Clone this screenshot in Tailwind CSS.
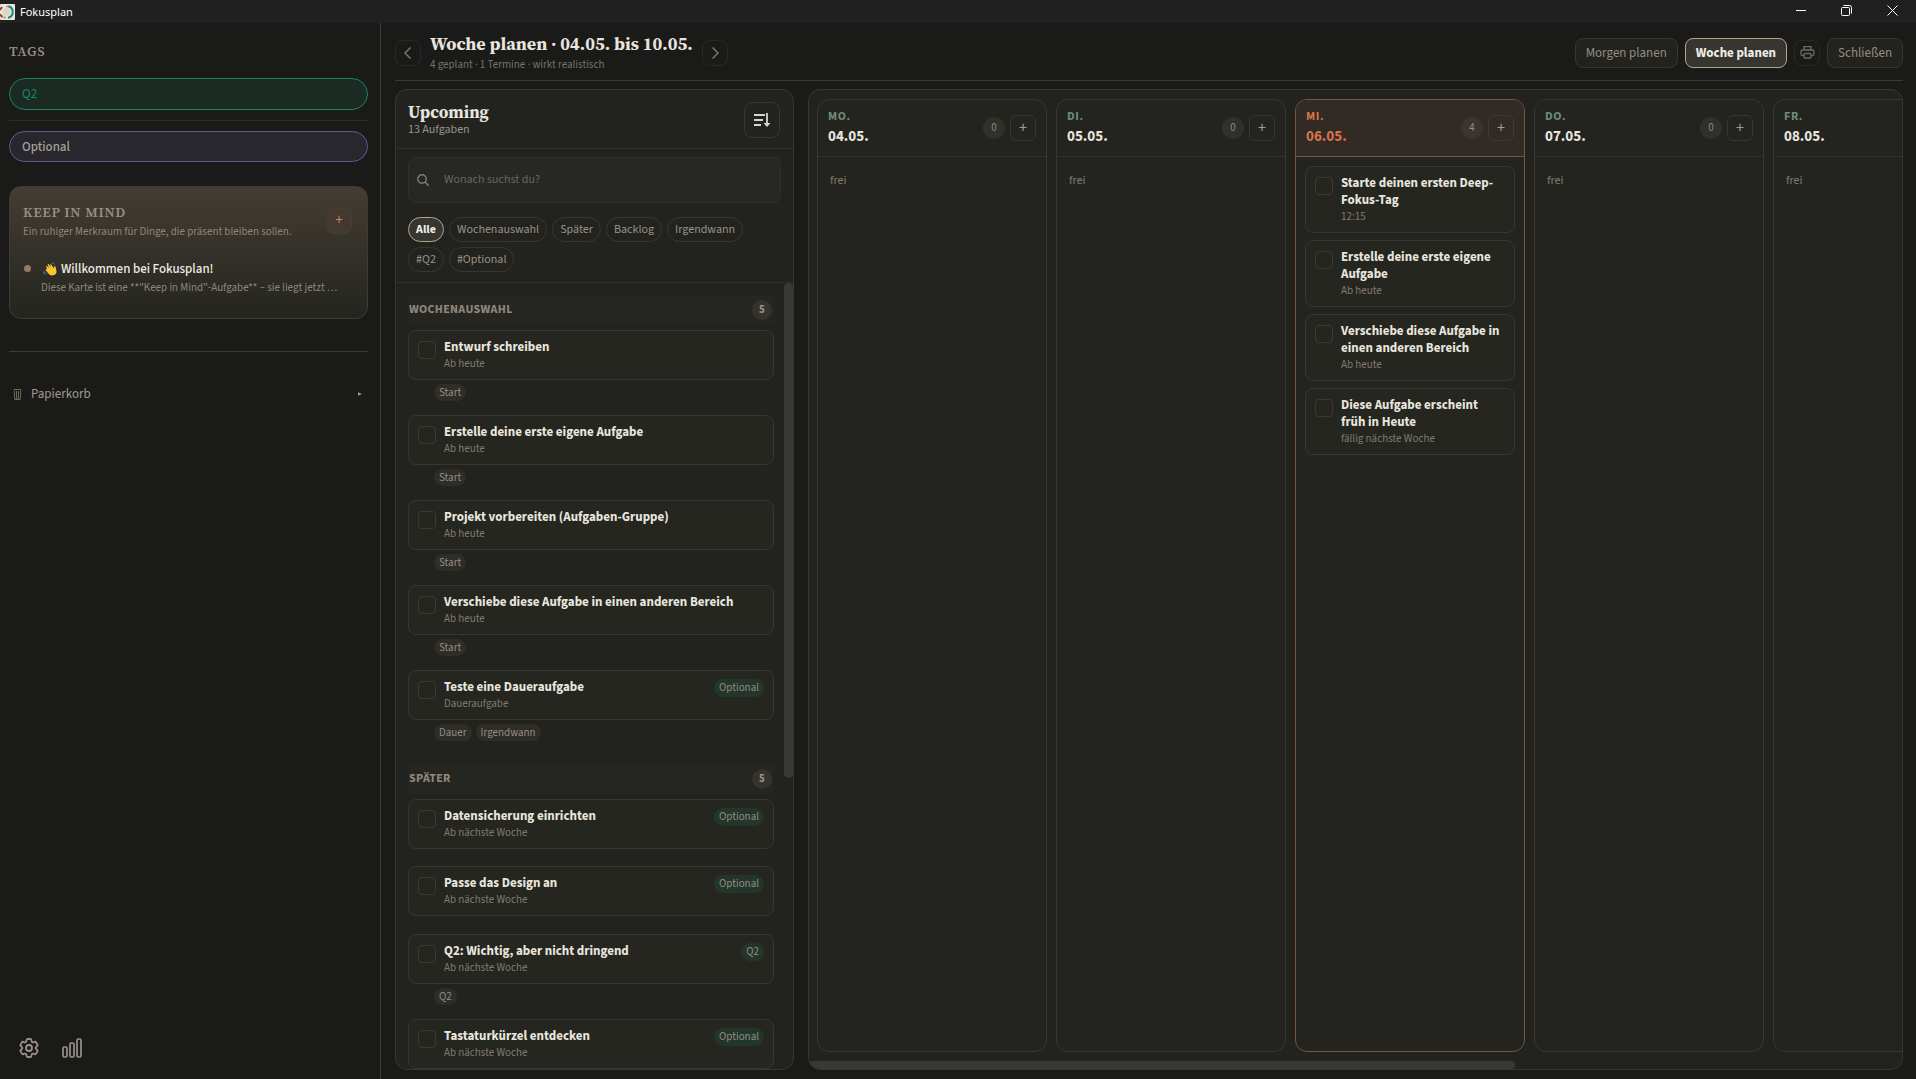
<!DOCTYPE html>
<html lang="de">
<head>
    <meta charset="UTF-8">
    <meta name="viewport" content="width=device-width, initial-scale=1.0">
    <title>Fokusplan</title>
    <script src="https://cdn.jsdelivr.net/npm/@tailwindcss/browser@4"></script>
</head>
<body class="h-screen flex flex-col overflow-hidden bg-[#1a1a18] text-[#e8e5de] text-[12px] leading-4 font-['Source_Sans_3','Source_Sans_Pro','Noto_Sans_CJK_SC',sans-serif]">
    <!-- Titelleiste -->
    <header class="h-[23px] shrink-0 flex items-center justify-between bg-[#202020] text-white">
        <div class="flex items-center gap-[5px]">
            <svg class="w-[15px] h-4" viewBox="0 0 15 16" fill="none">
                <rect width="15" height="16" rx="1" fill="#ece6dc"/>
                <path d="M2 3 0 6M0 10.500 2.500 13" stroke="#8d3a2c" stroke-width="2"/>
                <path d="M6 2.500h3M3 13.500h3" stroke="#b98a74" stroke-width="1.500"/>
                <path d="M8.500 2.200A6 6 0 0 1 8 13.800" stroke="#0f8a80" stroke-width="2"/>
                <circle cx="6.500" cy="8" r="4" fill="#dcd5c9"/>
            </svg>
            <span class="font-['Noto_Sans',sans-serif] text-[11px]">Fokusplan</span>
        </div>
        <div class="flex items-center gap-[35px] pr-[18px] pb-[3px]">
            <button aria-label="Minimieren"><svg class="w-[10px] h-[10px]" viewBox="0 0 10 10" stroke="currentColor"><path d="M0 5.500h10"/></svg></button>
            <button aria-label="Wiederherstellen"><svg class="w-[11px] h-[11px]" viewBox="0 0 11 11" fill="none" stroke="currentColor"><rect x=".5" y="2.500" width="8" height="8" rx="1"/><path d="M2.500.5H8.500a2 2 0 0 1 2 2V8.500"/></svg></button>
            <button aria-label="Fenster schließen"><svg class="w-[11px] h-[11px]" viewBox="0 0 11 11" stroke="currentColor"><path d="M.5.5l10 10M10.500.5l-10 10"/></svg></button>
        </div>
    </header>

    <div class="flex-1 flex min-h-0">
        <!-- Seitenleiste -->
        <aside class="w-[381px] shrink-0 flex flex-col border-r border-[#3a3a36] pl-[9px] pr-3 pt-5">
            <h2 class="font-['Source_Serif_4','Noto_Serif_CJK_SC','Liberation_Serif',serif] font-semibold text-[14px] leading-4 tracking-wider text-[#968c81]">TAGS</h2>
            <button class="mt-[19px] h-8 rounded-full border border-[#1c8360] bg-[#1c2a24] px-3 text-left text-[13px] text-[#1f8361]">Q2</button>
            <hr class="my-[10px] border-[#2a2a27]">
            <button class="h-[31px] rounded-full border border-[#5f5a95] bg-[#28272d] px-3 text-left text-[13px] font-medium text-[#a5a19c]">Optional</button>

            <section class="mt-6 h-[133px] rounded-xl border border-[#3e3b35] bg-linear-to-b from-[#443d34] to-[#24251f] px-[13px] pt-[17px]">
                <div class="flex items-start justify-between">
                    <div>
                        <h2 class="font-['Source_Serif_4','Noto_Serif_CJK_SC','Liberation_Serif',serif] font-semibold text-[14px] leading-4 tracking-wider text-[#988f83]">KEEP IN MIND</h2>
                        <p class="mt-1 text-[11px] text-[#8f867b]">Ein ruhiger Merkraum für Dinge, die präsent bleiben sollen.</p>
                    </div>
                    <button class="mt-1 mr-[2px] w-[26px] h-[26px] rounded-lg border border-[#463e35] bg-[#433930] text-[15px] text-[#b8876c]" aria-label="Hinzufügen">+</button>
                </div>
                <div class="mt-[19px] flex gap-[10px] pl-px">
                    <span class="mt-[6px] w-[7px] h-[7px] shrink-0 rounded-full bg-[#8f7d68]"></span>
                    <div class="min-w-0">
                        <p class="flex items-center gap-1 pl-[2px] leading-5 text-[13px] font-medium text-[#f0ede6]">
                            <svg class="w-[14px] h-[14px]" viewBox="0 0 14 14"><path d="M4 7 3 4.500q1-1 1.600.2L6 6 4.500 2.500Q5.600 1.500 6.300 3L8 5.500 7 2.500q1-.8 1.600.4L11 6.500 11 4.500q1.500-.8 1.700 1L13.500 9q.3 4-4.500 4.500Q6.500 13.500 4 10Q3.400 8.600 2.600 8Q3 6.700 4 7Z" fill="#fbc531"/><path d="M1 8.500Q1 11 3.500 12M.2 10Q.5 11.500 2 12.500M8.500 1q2 0 3 1.500" fill="none" stroke="#3d75b8"/></svg>
                            Willkommen bei Fokusplan!
                        </p>
                        <p class="text-[11px] leading-[18px] text-[#8f867b] whitespace-nowrap">Diese Karte ist eine **"Keep in Mind"-Aufgabe** – sie liegt jetzt …</p>
                    </div>
                </div>
            </section>

            <hr class="mt-8 border-[#3a3a36]">
            <button class="mt-[34px] flex items-center pl-1 pr-[6px] text-[13px] text-[#a0988e]">
                <svg class="w-[9px] h-3 text-[#6e6760]" viewBox="0 0 9 12" fill="none" stroke="currentColor"><path d="M1.200 2.500 1.800 11.500H7.200L7.800 2.500M.8 1.500H8.200M3.500 3v8M5.500 3v8"/></svg>
                <span class="ml-[9px]">Papierkorb</span>
                <svg class="ml-auto w-1 h-1" viewBox="0 0 4 4" fill="currentColor"><path d="M0 .3 4 2 0 3.700Z"/></svg>
            </button>

            <div class="mt-auto mb-[21px] ml-[10px] flex items-center gap-[23px] text-[#9b9188]">
                <button aria-label="Einstellungen">
                    <svg class="w-5 h-5" viewBox="2 2 20 20" fill="none" stroke="currentColor" stroke-width="1.800" stroke-linejoin="round"><path d="M9.594 3.940c.090-.542.560-.940 1.110-.940h2.593c.550 0 1.020.398 1.110.940l.213 1.281c.063.374.313.686.645.870.074.040.147.083.220.127.325.196.720.257 1.075.124l1.217-.456a1.125 1.125 0 0 1 1.370.490l1.296 2.247a1.125 1.125 0 0 1-.260 1.431l-1.003.827c-.293.241-.438.613-.430.992a7.723 7.723 0 0 1 0 .255c-.008.378.137.750.430.991l1.004.827c.424.350.534.955.260 1.430l-1.298 2.247a1.125 1.125 0 0 1-1.369.491l-1.217-.456c-.355-.133-.750-.072-1.076.124a6.470 6.470 0 0 1-.220.128c-.331.183-.581.495-.644.869l-.213 1.281c-.090.543-.560.940-1.110.940h-2.594c-.550 0-1.019-.398-1.110-.940l-.213-1.281c-.062-.374-.312-.686-.644-.870a6.520 6.520 0 0 1-.220-.127c-.325-.196-.720-.257-1.076-.124l-1.217.456a1.125 1.125 0 0 1-1.369-.490l-1.297-2.247a1.125 1.125 0 0 1 .260-1.431l1.004-.827c.292-.240.437-.613.430-.991a6.932 6.932 0 0 1 0-.255c.007-.380-.138-.751-.430-.992l-1.004-.827a1.125 1.125 0 0 1-.260-1.430l1.297-2.247a1.125 1.125 0 0 1 1.370-.491l1.216.456c.356.133.751.072 1.076-.124.072-.044.146-.086.220-.128.332-.183.582-.495.644-.869l.214-1.280Z"/><circle cx="12" cy="12" r="3"/></svg>
                </button>
                <button aria-label="Statistik">
                    <svg class="w-5 h-5" viewBox="0 0 20 20" fill="none" stroke="currentColor" stroke-width="1.700"><rect x="1" y="9" width="4" height="10" rx="1.200"/><rect x="8" y="5" width="4" height="14" rx="1.200"/><rect x="15" y="1" width="4" height="18" rx="1.200"/></svg>
                </button>
            </div>
        </aside>

        <main class="flex-1 min-w-0 flex flex-col pl-[14px] pr-[13px] pb-[9px]">
            <!-- Kopfzeile -->
            <div class="h-[58px] shrink-0 flex items-center border-b border-[#3a3a33] pt-[2px]">
                <button class="w-[26px] h-[26px] flex items-center justify-center rounded-lg border border-[#282826] text-[#7a736a]" aria-label="Vorige Woche">
                    <svg class="w-3 h-3" viewBox="0 0 12 12" fill="none" stroke="currentColor" stroke-width="1.500"><path d="M8.500.5 3 6l5.500 5.500"/></svg>
                </button>
                <div class="mx-[9px]">
                    <h1 class="font-['Source_Serif_4','Noto_Serif_CJK_SC','Liberation_Serif',serif] font-bold text-[18px] leading-6">Woche planen · 04.05. bis 10.05.</h1>
                    <p class="text-[11px] leading-[18px] text-[#77716a]">4 geplant · 1 Termine · wirkt realistisch</p>
                </div>
                <button class="w-[26px] h-[26px] flex items-center justify-center rounded-lg border border-[#282826] text-[#7a736a]" aria-label="Nächste Woche">
                    <svg class="w-3 h-3" viewBox="0 0 12 12" fill="none" stroke="currentColor" stroke-width="1.500"><path d="M3.500.5 9 6l-5.500 5.500"/></svg>
                </button>
                <div class="ml-auto flex items-center gap-[7px] text-[13px] text-[#958c82]">
                    <button class="h-[30px] px-[10px] rounded-lg border border-[#363732] bg-[#22231e]">Morgen planen</button>
                    <button class="h-[30px] px-[10px] rounded-lg border border-[#b5a48c] bg-[#37352f] font-bold text-[#f0ede6]">Woche planen</button>
                    <button class="w-[26px] h-[26px] flex items-center justify-center rounded-lg border border-[#282826] text-[#6f6961]" aria-label="Drucken">
                        <svg class="w-[15px] h-[15px]" viewBox="0 0 15 15" fill="none" stroke="currentColor" stroke-width="1.300"><path d="M4 5V1.600h7V5M4 10.500H2.500Q1 10.500 1 9V6.500Q1 5 2.500 5h10Q14 5 14 6.500V9q0 1.500-1.500 1.500H11"/><rect x="4" y="8.500" width="7" height="4.500" rx="1"/></svg>
                    </button>
                    <button class="h-[30px] px-[10px] rounded-lg border border-[#363732] bg-[#22231e]">Schließen</button>
                </div>
            </div>

            <div class="mt-2 flex-1 min-h-0 flex gap-[14px]">
                <!-- Aufgabenliste -->
                <section class="w-[399px] shrink-0 flex flex-col overflow-hidden rounded-xl border border-[#363732] bg-[#22231e]">
                    <div class="h-[59px] shrink-0 flex items-center justify-between border-b border-[#30312c] pl-3 pr-[13px] pt-[2px]">
                        <div>
                            <h2 class="font-['Source_Serif_4','Noto_Serif_CJK_SC','Liberation_Serif',serif] font-bold text-[17px] leading-5">Upcoming</h2>
                            <p class="text-[12px] text-[#9b9188]">13 Aufgaben</p>
                        </div>
                        <button class="w-9 h-9 flex items-center justify-center rounded-lg border border-[#363732] text-[#d8d5ce]" aria-label="Sortieren">
                            <svg class="w-[18px] h-[16px]" viewBox="0 0 18 16" fill="none" stroke="currentColor" stroke-width="1.800"><path d="M1 3h11M1 8h9M1 13h7M14 1v12"/><path d="M10.500 11h7L14 15Z" fill="currentColor" stroke="none"/></svg>
                        </button>
                    </div>
                    <div class="shrink-0 border-b border-[#30312c] px-3 pt-2 pb-[10px]">
                        <label class="h-[46px] flex items-center gap-[15px] rounded-lg border border-[#30312c] bg-[#272823] px-2 text-[#857d74]">
                            <svg class="w-3 h-3" viewBox="0 0 12 12" fill="none" stroke="currentColor" stroke-width="1.400"><circle cx="5" cy="5" r="4.200"/><path d="m8 8 3.700 3.700"/></svg>
                            <input type="search" placeholder="Wonach suchst du?" aria-label="Aufgaben suchen" class="flex-1 bg-transparent outline-none placeholder:text-[#6c665e]">
                        </label>
                        <div class="mt-[14px] flex flex-wrap gap-[5px] text-[12px] text-[#9b9188]">
                            <button class="h-[25px] px-[7px] rounded-full border border-[#b5a48c] bg-[#37352f] font-bold text-[#f0ede6]">Alle</button>
                            <button class="h-[25px] px-[7px] rounded-full border border-[#363732]">Wochenauswahl</button>
                            <button class="h-[25px] px-[7px] rounded-full border border-[#363732]">Später</button>
                            <button class="h-[25px] px-[7px] rounded-full border border-[#363732]">Backlog</button>
                            <button class="h-[25px] px-[7px] rounded-full border border-[#363732]">Irgendwann</button>
                            <button class="h-[25px] px-[7px] rounded-full border border-[#363732]">#Q2</button>
                            <button class="h-[25px] px-[7px] rounded-full border border-[#363732]">#Optional</button>
                        </div>
                    </div>

                    <div class="flex-1 min-h-0 flex">
                        <div class="flex-1 overflow-hidden pl-3 pr-[10px] pt-3">
                            <div class="h-[30px] flex items-center justify-between bg-[#252622] pl-px pr-[2px]">
                                <h3 class="text-[12px] font-bold tracking-wide text-[#91887d]">WOCHENAUSWAHL</h3>
                                <span class="w-5 h-5 rounded-full bg-[#35332e] text-center text-[11px] leading-5 font-bold text-[#9b9188]">5</span>
                            </div>
                            <ul class="mt-[5px]">
                                <li class="h-[85px]">
                                    <div class="h-[50px] flex gap-2 rounded-lg border border-[#363732] bg-[#252620] px-[9px] pt-2">
                                        <input type="checkbox" id="w1" class="mt-[2px] w-[18px] h-[18px] shrink-0 appearance-none rounded-sm border border-[#3b3b36]">
                                        <label for="w1" class="flex-1"><span class="block text-[13px] leading-[17px] font-bold">Entwurf schreiben</span><span class="block text-[11px] text-[#827a70]">Ab heute</span></label>
                                    </div>
                                    <div class="mt-1 ml-[26px] flex gap-1 text-[11px] leading-[17px] text-[#958c82]"><span class="rounded-full bg-[#2e2d28] px-[5px]">Start</span></div>
                                </li>
                                <li class="h-[85px]">
                                    <div class="h-[50px] flex gap-2 rounded-lg border border-[#363732] bg-[#252620] px-[9px] pt-2">
                                        <input type="checkbox" id="w2" class="mt-[2px] w-[18px] h-[18px] shrink-0 appearance-none rounded-sm border border-[#3b3b36]">
                                        <label for="w2" class="flex-1"><span class="block text-[13px] leading-[17px] font-bold">Erstelle deine erste eigene Aufgabe</span><span class="block text-[11px] text-[#827a70]">Ab heute</span></label>
                                    </div>
                                    <div class="mt-1 ml-[26px] flex gap-1 text-[11px] leading-[17px] text-[#958c82]"><span class="rounded-full bg-[#2e2d28] px-[5px]">Start</span></div>
                                </li>
                                <li class="h-[85px]">
                                    <div class="h-[50px] flex gap-2 rounded-lg border border-[#363732] bg-[#252620] px-[9px] pt-2">
                                        <input type="checkbox" id="w3" class="mt-[2px] w-[18px] h-[18px] shrink-0 appearance-none rounded-sm border border-[#3b3b36]">
                                        <label for="w3" class="flex-1"><span class="block text-[13px] leading-[17px] font-bold">Projekt vorbereiten (Aufgaben-Gruppe)</span><span class="block text-[11px] text-[#827a70]">Ab heute</span></label>
                                    </div>
                                    <div class="mt-1 ml-[26px] flex gap-1 text-[11px] leading-[17px] text-[#958c82]"><span class="rounded-full bg-[#2e2d28] px-[5px]">Start</span></div>
                                </li>
                                <li class="h-[85px]">
                                    <div class="h-[50px] flex gap-2 rounded-lg border border-[#363732] bg-[#252620] px-[9px] pt-2">
                                        <input type="checkbox" id="w4" class="mt-[2px] w-[18px] h-[18px] shrink-0 appearance-none rounded-sm border border-[#3b3b36]">
                                        <label for="w4" class="flex-1"><span class="block text-[13px] leading-[17px] font-bold">Verschiebe diese Aufgabe in einen anderen Bereich</span><span class="block text-[11px] text-[#827a70]">Ab heute</span></label>
                                    </div>
                                    <div class="mt-1 ml-[26px] flex gap-1 text-[11px] leading-[17px] text-[#958c82]"><span class="rounded-full bg-[#2e2d28] px-[5px]">Start</span></div>
                                </li>
                                <li class="h-[85px]">
                                    <div class="h-[50px] flex items-start gap-2 rounded-lg border border-[#363732] bg-[#252620] px-[9px] pt-2">
                                        <input type="checkbox" id="w5" class="mt-[2px] w-[18px] h-[18px] shrink-0 appearance-none rounded-sm border border-[#3b3b36]">
                                        <label for="w5" class="flex-1"><span class="block text-[13px] leading-[17px] font-bold">Teste eine Daueraufgabe</span><span class="block text-[11px] text-[#827a70]">Daueraufgabe</span></label>
                                        <span class="rounded-full bg-[#24352b] px-[5px] text-[11px] leading-[18px] text-[#8f8f82]">Optional</span>
                                    </div>
                                    <div class="mt-1 ml-[26px] flex gap-1 text-[11px] leading-[17px] text-[#958c82]"><span class="rounded-full bg-[#2e2d28] px-[5px]">Dauer</span><span class="rounded-full bg-[#2e2d28] px-[5px]">Irgendwann</span></div>
                                </li>
                            </ul>

                            <div class="mt-[9px] h-[30px] flex items-center justify-between bg-[#252622] pl-px pr-[2px]">
                                <h3 class="text-[12px] font-bold tracking-wide text-[#91887d]">SPÄTER</h3>
                                <span class="w-5 h-5 rounded-full bg-[#35332e] text-center text-[11px] leading-5 font-bold text-[#9b9188]">5</span>
                            </div>
                            <ul class="mt-[5px]">
                                <li class="h-[67px]">
                                    <div class="h-[50px] flex items-start gap-2 rounded-lg border border-[#363732] bg-[#252620] px-[9px] pt-2">
                                        <input type="checkbox" id="s1" class="mt-[2px] w-[18px] h-[18px] shrink-0 appearance-none rounded-sm border border-[#3b3b36]">
                                        <label for="s1" class="flex-1"><span class="block text-[13px] leading-[17px] font-bold">Datensicherung einrichten</span><span class="block text-[11px] text-[#827a70]">Ab nächste Woche</span></label>
                                        <span class="rounded-full bg-[#24352b] px-[5px] text-[11px] leading-[18px] text-[#8f8f82]">Optional</span>
                                    </div>
                                </li>
                                <li class="h-[68px]">
                                    <div class="h-[50px] flex items-start gap-2 rounded-lg border border-[#363732] bg-[#252620] px-[9px] pt-2">
                                        <input type="checkbox" id="s2" class="mt-[2px] w-[18px] h-[18px] shrink-0 appearance-none rounded-sm border border-[#3b3b36]">
                                        <label for="s2" class="flex-1"><span class="block text-[13px] leading-[17px] font-bold">Passe das Design an</span><span class="block text-[11px] text-[#827a70]">Ab nächste Woche</span></label>
                                        <span class="rounded-full bg-[#24352b] px-[5px] text-[11px] leading-[18px] text-[#8f8f82]">Optional</span>
                                    </div>
                                </li>
                                <li class="h-[85px]">
                                    <div class="h-[50px] flex items-start gap-2 rounded-lg border border-[#363732] bg-[#252620] px-[9px] pt-2">
                                        <input type="checkbox" id="s3" class="mt-[2px] w-[18px] h-[18px] shrink-0 appearance-none rounded-sm border border-[#3b3b36]">
                                        <label for="s3" class="flex-1"><span class="block text-[13px] leading-[17px] font-bold">Q2: Wichtig, aber nicht dringend</span><span class="block text-[11px] text-[#827a70]">Ab nächste Woche</span></label>
                                        <span class="rounded-full bg-[#24352b] px-[5px] text-[11px] leading-[18px] text-[#8f8f82]">Q2</span>
                                    </div>
                                    <div class="mt-1 ml-[26px] flex gap-1 text-[11px] leading-[17px] text-[#958c82]"><span class="rounded-full bg-[#2e2d28] px-[5px]">Q2</span></div>
                                </li>
                                <li>
                                    <div class="h-[50px] flex items-start gap-2 rounded-lg border border-[#363732] bg-[#252620] px-[9px] pt-2">
                                        <input type="checkbox" id="s4" class="mt-[2px] w-[18px] h-[18px] shrink-0 appearance-none rounded-sm border border-[#3b3b36]">
                                        <label for="s4" class="flex-1"><span class="block text-[13px] leading-[17px] font-bold">Tastaturkürzel entdecken</span><span class="block text-[11px] text-[#827a70]">Ab nächste Woche</span></label>
                                        <span class="rounded-full bg-[#24352b] px-[5px] text-[11px] leading-[18px] text-[#8f8f82]">Optional</span>
                                    </div>
                                </li>
                            </ul>
                        </div>
                        <div class="w-[9px] shrink-0"><div class="h-[63%] rounded-full bg-[#3a3833]"></div></div>
                    </div>
                </section>

                <!-- Wochenansicht -->
                <section class="flex-1 min-w-0 flex flex-col overflow-hidden rounded-xl border border-[#363732] bg-[#22231e]">
                    <div class="flex-1 min-h-0 flex gap-[9px] pl-2 pt-[9px]">
                        <article class="w-[230px] shrink-0 rounded-xl border border-[#363732] bg-[#23241f]">
                            <div class="h-[57px] flex items-center border-b border-[#30312c] px-[10px]">
                                <div class="flex-1 pb-[3px]">
                                    <p class="text-[12px] leading-5 font-bold tracking-wider text-[#6f8b78]">MO.</p>
                                    <h3 class="text-[15px] leading-5 font-bold">04.05.</h3>
                                </div>
                                <span class="w-[22px] h-[22px] rounded-full bg-[#2f312b] text-center text-[11px] leading-[22px] text-[#958c82]">0</span>
                                <button class="ml-[5px] w-[26px] h-[26px] rounded-md border border-[#363732] text-[16px] text-[#a59c91]" aria-label="Aufgabe hinzufügen">+</button>
                            </div>
                            <p class="px-3 pt-4 text-[12px] text-[#827a70]">frei</p>
                        </article>
                        <article class="w-[230px] shrink-0 rounded-xl border border-[#363732] bg-[#23241f]">
                            <div class="h-[57px] flex items-center border-b border-[#30312c] px-[10px]">
                                <div class="flex-1 pb-[3px]">
                                    <p class="text-[12px] leading-5 font-bold tracking-wider text-[#6f8b78]">DI.</p>
                                    <h3 class="text-[15px] leading-5 font-bold">05.05.</h3>
                                </div>
                                <span class="w-[22px] h-[22px] rounded-full bg-[#2f312b] text-center text-[11px] leading-[22px] text-[#958c82]">0</span>
                                <button class="ml-[5px] w-[26px] h-[26px] rounded-md border border-[#363732] text-[16px] text-[#a59c91]" aria-label="Aufgabe hinzufügen">+</button>
                            </div>
                            <p class="px-3 pt-4 text-[12px] text-[#827a70]">frei</p>
                        </article>
                        <article class="w-[230px] shrink-0 overflow-hidden rounded-xl border border-[#7a5540] bg-[#23241f]">
                            <div class="h-[57px] flex items-center border-b border-[#7a5540] bg-[#322a24] px-[10px]">
                                <div class="flex-1 pb-[3px] text-[#d6724a]">
                                    <p class="text-[12px] leading-5 font-bold tracking-wider">MI.</p>
                                    <h3 class="text-[15px] leading-5 font-bold">06.05.</h3>
                                </div>
                                <span class="w-[22px] h-[22px] rounded-full bg-[#3a352f] text-center text-[11px] leading-[22px] text-[#958c82]">4</span>
                                <button class="ml-[5px] w-[26px] h-[26px] rounded-md border border-[#42372f] text-[16px] text-[#a59c91]" aria-label="Aufgabe hinzufügen">+</button>
                            </div>
                            <ul class="px-[9px] pt-[9px] flex flex-col gap-[7px]">
                                <li class="flex gap-2 rounded-lg border border-[#363732] bg-[#252620] pl-[9px] pr-1 pt-2 pb-[7px]">
                                    <input type="checkbox" id="m1" class="mt-[2px] w-[18px] h-[18px] shrink-0 appearance-none rounded-sm border border-[#3b3b36]">
                                    <label for="m1" class="flex-1"><span class="block text-[13px] leading-[17px] font-bold">Starte deinen ersten Deep-<br>Fokus-Tag</span><span class="block text-[11px] text-[#827a70]">12:15</span></label>
                                </li>
                                <li class="flex gap-2 rounded-lg border border-[#363732] bg-[#252620] pl-[9px] pr-1 pt-2 pb-[7px]">
                                    <input type="checkbox" id="m2" class="mt-[2px] w-[18px] h-[18px] shrink-0 appearance-none rounded-sm border border-[#3b3b36]">
                                    <label for="m2" class="flex-1"><span class="block text-[13px] leading-[17px] font-bold">Erstelle deine erste eigene<br>Aufgabe</span><span class="block text-[11px] text-[#827a70]">Ab heute</span></label>
                                </li>
                                <li class="flex gap-2 rounded-lg border border-[#363732] bg-[#252620] pl-[9px] pr-1 pt-2 pb-[7px]">
                                    <input type="checkbox" id="m3" class="mt-[2px] w-[18px] h-[18px] shrink-0 appearance-none rounded-sm border border-[#3b3b36]">
                                    <label for="m3" class="flex-1"><span class="block text-[13px] leading-[17px] font-bold">Verschiebe diese Aufgabe in<br>einen anderen Bereich</span><span class="block text-[11px] text-[#827a70]">Ab heute</span></label>
                                </li>
                                <li class="flex gap-2 rounded-lg border border-[#363732] bg-[#252620] pl-[9px] pr-1 pt-2 pb-[7px]">
                                    <input type="checkbox" id="m4" class="mt-[2px] w-[18px] h-[18px] shrink-0 appearance-none rounded-sm border border-[#3b3b36]">
                                    <label for="m4" class="flex-1"><span class="block text-[13px] leading-[17px] font-bold">Diese Aufgabe erscheint<br>früh in Heute</span><span class="block text-[11px] text-[#827a70]">fällig nächste Woche</span></label>
                                </li>
                            </ul>
                        </article>
                        <article class="w-[230px] shrink-0 rounded-xl border border-[#363732] bg-[#23241f]">
                            <div class="h-[57px] flex items-center border-b border-[#30312c] px-[10px]">
                                <div class="flex-1 pb-[3px]">
                                    <p class="text-[12px] leading-5 font-bold tracking-wider text-[#6f8b78]">DO.</p>
                                    <h3 class="text-[15px] leading-5 font-bold">07.05.</h3>
                                </div>
                                <span class="w-[22px] h-[22px] rounded-full bg-[#2f312b] text-center text-[11px] leading-[22px] text-[#958c82]">0</span>
                                <button class="ml-[5px] w-[26px] h-[26px] rounded-md border border-[#363732] text-[16px] text-[#a59c91]" aria-label="Aufgabe hinzufügen">+</button>
                            </div>
                            <p class="px-3 pt-4 text-[12px] text-[#827a70]">frei</p>
                        </article>
                        <article class="w-[230px] shrink-0 rounded-xl border border-[#363732] bg-[#23241f]">
                            <div class="h-[57px] flex items-center border-b border-[#30312c] px-[10px]">
                                <div class="pb-[3px]">
                                    <p class="text-[12px] leading-5 font-bold tracking-wider text-[#6f8b78]">FR.</p>
                                    <h3 class="text-[15px] leading-5 font-bold">08.05.</h3>
                                </div>
                            </div>
                            <p class="px-3 pt-4 text-[12px] text-[#827a70]">frei</p>
                        </article>
                    </div>
                    <div class="mt-[9px] h-2 shrink-0"><div class="w-[64.6%] h-2 rounded-full bg-[#3a3833]"></div></div>
                </section>
            </div>
        </main>
    </div>
</body>
</html>
